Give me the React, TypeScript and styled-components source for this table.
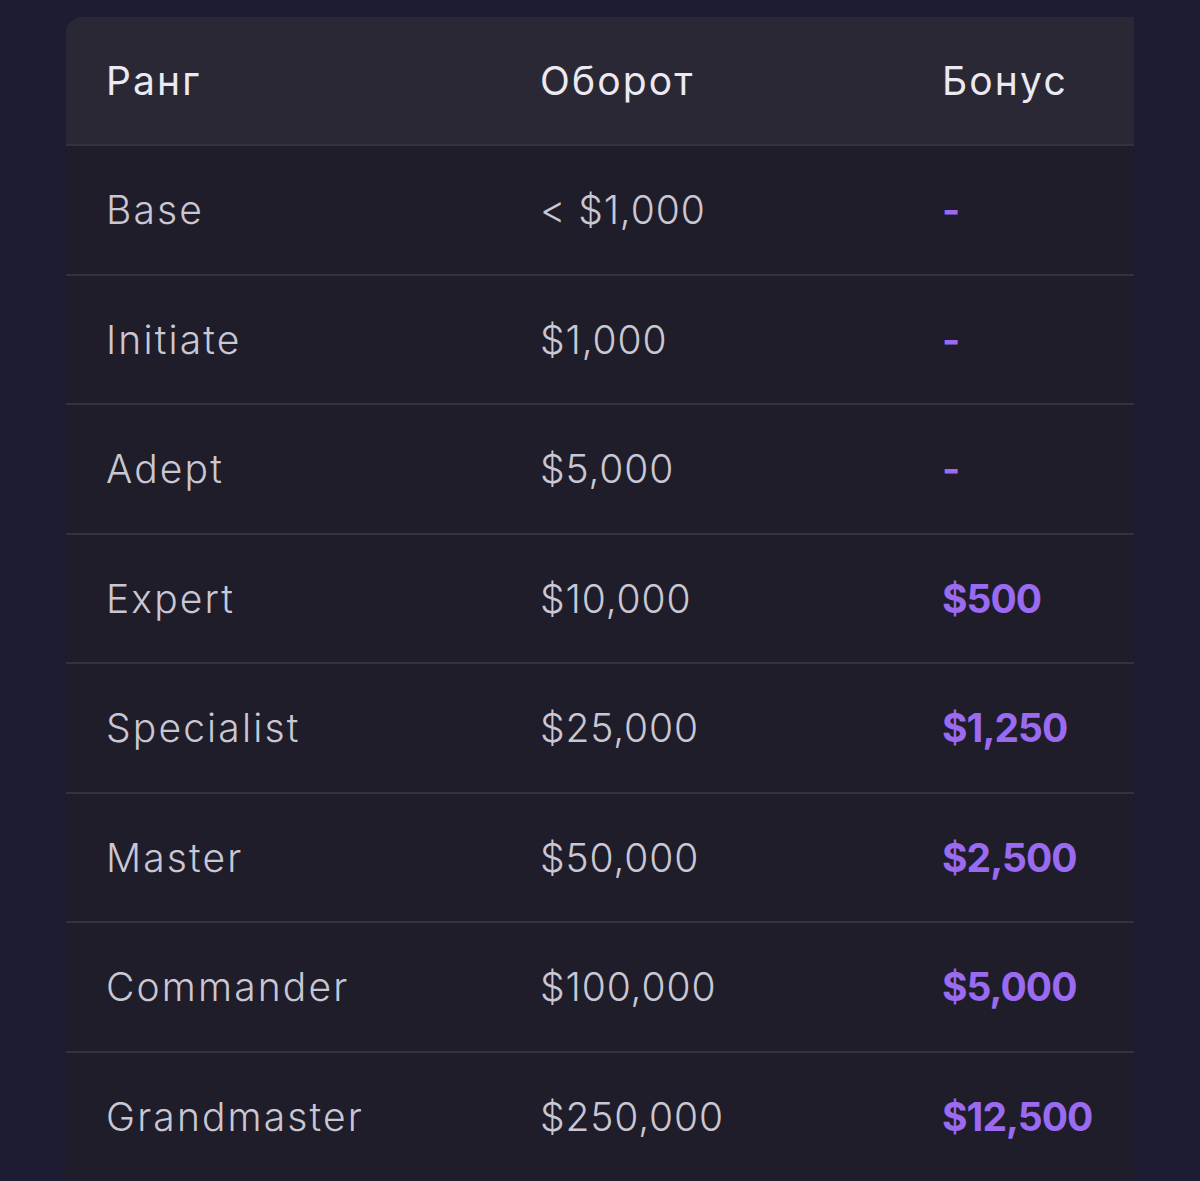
import React from 'react'
import styled, { createGlobalStyle } from 'styled-components'

const GlobalStyle = createGlobalStyle`
    html, body {
        margin: 0;
        padding: 0;
        background: #1c1c32;
    }
    body {
        font-family: Inter, "Noto Sans", sans-serif;
    }
`

const Page = styled.div`
    min-height: 1181px;
    padding: 17px 66px 0 66px;
    box-sizing: border-box;
    overflow: hidden;
`

const Card = styled.div`
    width: 1068px;
    border-top-left-radius: 16px;
    overflow: hidden;
    background: #1f1d29;
`

const Row = styled.div<{ $head?: boolean }>`
    display: grid;
    grid-template-columns: 434px 402px 1fr;
    align-items: center;
    height: ${p => (p.$head ? '127px' : '127.5px')};
    background: ${p => (p.$head ? '#2a2835' : '#1f1d29')};
    border-top: ${p => (p.$head ? 'none' : '2px solid #34323e')};
`

type Kind = 'head' | 'text' | 'num' | 'bonus'

const spacing: Record<Kind, string> = {
    head: '0.055em',
    text: '0.055em',
    num: '0.022em',
    bonus: '-0.025em',
}

const Cell = styled.div<{ $kind?: Kind }>`
    padding-left: 40px;
    font-size: 39px;
    line-height: 1;
    white-space: nowrap;
    letter-spacing: ${p => spacing[p.$kind || 'text']};
    color: ${p => (p.$kind === 'head' ? '#ebe9f2' : p.$kind === 'bonus' ? '#9a6af0' : '#c9c7d3')};
    font-weight: ${p => (p.$kind === 'head' ? 400 : p.$kind === 'bonus' ? 700 : 300)};
`

const rows = [
    ['Base', '< $1,000', '-'],
    ['Initiate', '$1,000', '-'],
    ['Adept', '$5,000', '-'],
    ['Expert', '$10,000', '$500'],
    ['Specialist', '$25,000', '$1,250'],
    ['Master', '$50,000', '$2,500'],
    ['Commander', '$100,000', '$5,000'],
    ['Grandmaster', '$250,000', '$12,500'],
]

const App: React.FC = () => {
    return (
        <Page>
            <GlobalStyle />
            <Card>
                <Row $head>
                    <Cell $kind="head">Ранг</Cell>
                    <Cell $kind="head">Оборот</Cell>
                    <Cell $kind="head">Бонус</Cell>
                </Row>
                {rows.map(([rank, turnover, bonus]) => (
                    <Row key={rank}>
                        <Cell>{rank}</Cell>
                        <Cell $kind="num">{turnover}</Cell>
                        <Cell $kind="bonus">{bonus}</Cell>
                    </Row>
                ))}
            </Card>
        </Page>
    )
}

export default App
